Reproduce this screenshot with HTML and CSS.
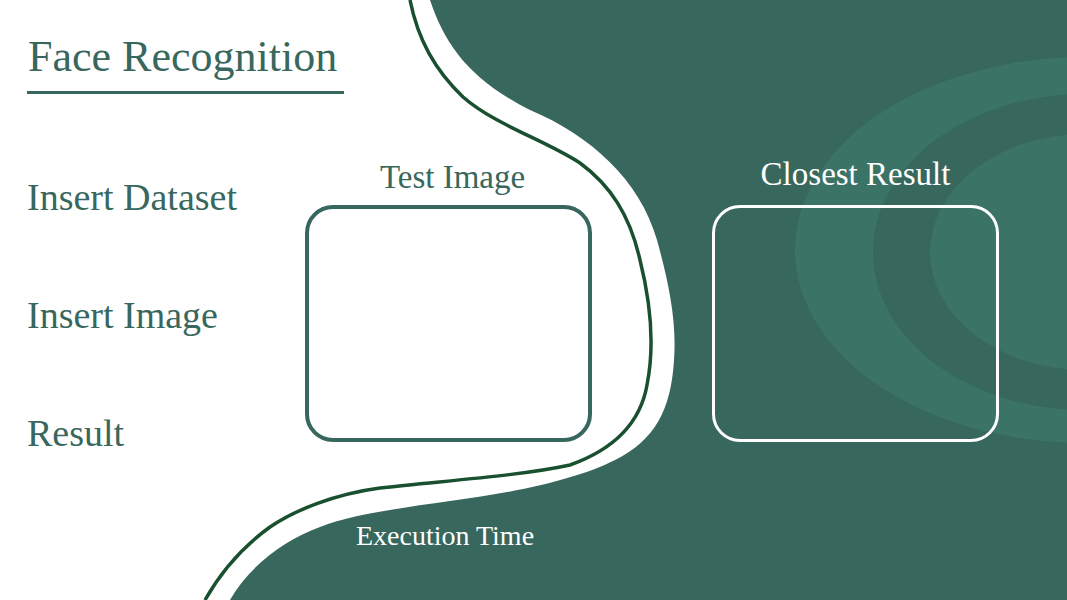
FILE: index.html
```html
<!DOCTYPE html>
<html lang="en">
<head>
    <meta charset="UTF-8">
    <meta name="viewport" content="width=device-width, initial-scale=1.0">
    <title>Face Recognition</title>
    <link rel="stylesheet" href="styles.css">
</head>
<body>

<div class="screen">
    <!-- background wave and rings -->
    <svg class="backdrop" width="1067" height="600" viewBox="0 0 1067 600">
        <path class="wave" d="M430,0 L1067,0 L1067,600 L230,600
            C250,565 285,540 320,527
            C350,515 400,508 450,501
            C520,492 580,478 615,460
            C655,440 671,410 674,360
            C677,320 668,280 657,240
            C640,180 590,135 530,110
            C470,80 445,45 430,0 Z"/>
        <ellipse class="ring-light" cx="1085" cy="250" rx="290" ry="193"/>
        <ellipse class="ring-dark" cx="1085" cy="252" rx="212" ry="158"/>
        <ellipse class="ring-light" cx="1085" cy="252" rx="155" ry="118"/>
        <path class="wave-line" d="M410,0
            C418,40 435,70 463,97
            C495,125 545,140 580,163
            C610,185 630,215 640,260
            C650,300 655,345 647,385
            C640,425 612,450 570,465
            C520,476 440,481 380,488
            C335,494 295,510 270,527
            C245,545 222,570 205,600"/>
    </svg>

    <div class="layout">
        <div class="sidebar">
            <h1 class="title">Face Recognition</h1>
            <div class="menu">
                <div class="menu-item">Insert Dataset</div>
                <div class="menu-item">Insert Image</div>
                <div class="menu-item">Result</div>
            </div>
        </div>

        <div class="panels">
            <div class="panel panel-test">
                <div class="panel-title">Test Image</div>
                <div class="frame frame-test"></div>
                <div class="exec-time">Execution Time</div>
            </div>
            <div class="panel panel-result">
                <div class="panel-title">Closest Result</div>
                <div class="frame frame-result"></div>
            </div>
        </div>
    </div>
</div>

</body>
</html>
```

FILE: styles.css
```css
* {
    margin: 0;
    padding: 0;
    box-sizing: border-box;
}

html, body {
    width: 100%;
    height: 100%;
    overflow: hidden;
    background-color: white;
    font-family: "Liberation Serif", "Times New Roman", serif;
}

.screen {
    position: relative;
    width: 1067px;
    height: 600px;
    overflow: hidden;
}

.backdrop {
    position: absolute;
    top: 0;
    left: 0;
    z-index: 0;
}

.wave {
    fill: #37675d;
}

.ring-light {
    fill: #3b7367;
}

.ring-dark {
    fill: #37675d;
}

.wave-line {
    fill: none;
    stroke: #19502f;
    stroke-width: 3.5;
}

.layout {
    position: relative;
    z-index: 1;
    display: flex;
    height: 100%;
}

/* left column */
.sidebar {
    width: 305px;
    flex-shrink: 0;
    padding-left: 27px;
    padding-top: 32px;
    color: #37675d;
}

.title {
    width: 317px;
    font-size: 44px;
    font-weight: normal;
    line-height: 50px;
    white-space: nowrap;
    padding-left: 1px;
    padding-bottom: 9px;
    border-bottom: 3px solid #37675d;
}

.menu {
    display: flex;
    flex-direction: column;
    gap: 74px;
    margin-top: 81px;
}

.menu-item {
    font-size: 38px;
    line-height: 44px;
    white-space: nowrap;
}

/* image panels */
.panels {
    display: flex;
    gap: 120px;
    padding-top: 155px;
}

.panel {
    display: flex;
    flex-direction: column;
    align-items: center;
    width: 287px;
}

.panel-title {
    font-size: 33px;
    line-height: 38px;
    margin-bottom: 12px;
    white-space: nowrap;
}

.panel-test .panel-title {
    color: #37675d;
    padding-top: 3px;
    padding-left: 8px;
    margin-bottom: 9px;
}

.panel-result .panel-title {
    color: white;
}

.frame {
    width: 287px;
    height: 237px;
    border-radius: 28px;
}

.frame-test {
    border: 4px solid #37675d;
    background: white;
}

.frame-result {
    border: 3px solid white;
}

.exec-time {
    margin-top: 78px;
    margin-right: 7px;
    color: white;
    font-size: 28px;
    line-height: 32px;
    white-space: nowrap;
}
```
